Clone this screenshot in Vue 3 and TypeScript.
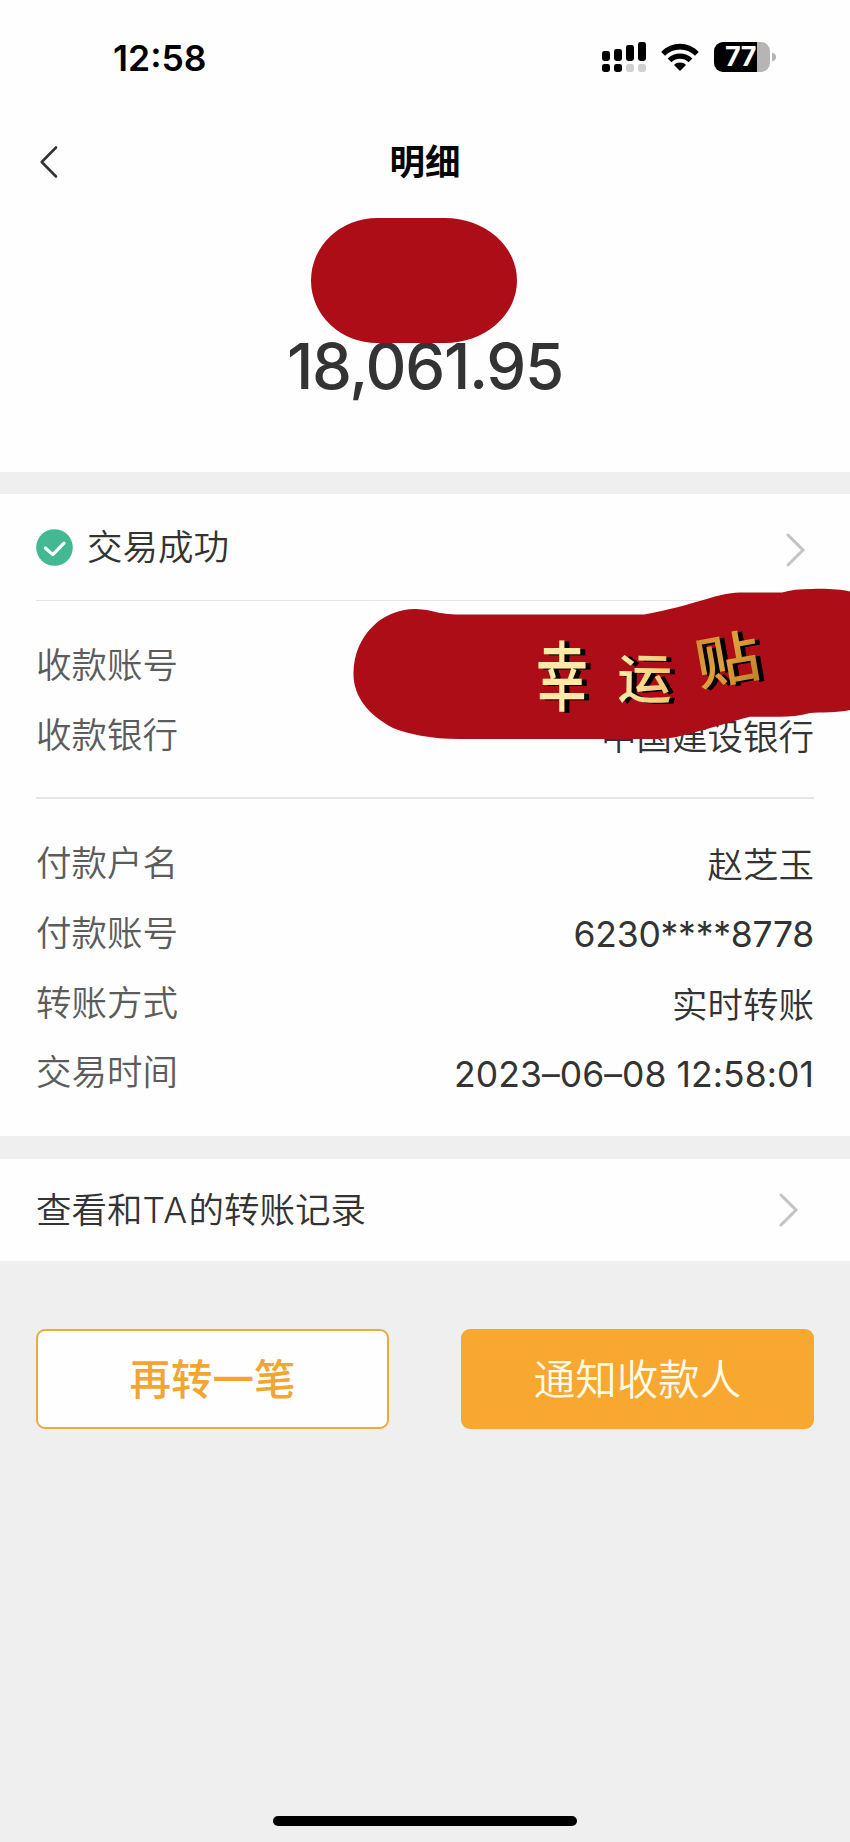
<script setup lang="ts">
interface Row {
  label: string
  value: string
  kind?: 'number' | 'date'
}

const payee: Row[] = [
  { label: '收款账号', value: '' },
  { label: '收款银行', value: '中国建设银行' },
]

const payer: Row[] = [
  { label: '付款户名', value: '赵芝玉' },
  { label: '付款账号', value: '6230****8778', kind: 'number' },
  { label: '转账方式', value: '实时转账' },
  { label: '交易时间', value: '2023–06–08 12:58:01', kind: 'date' },
]
</script>

<template>
  <div class="screen">
    <section class="top">
      <div class="statusbar">
        <span class="clock">12:58</span>
        <div class="indicators">
          <svg class="signal" width="46" height="32" viewBox="0 0 46 32">
            <rect x="1" y="10" width="8" height="10" rx="2.4" />
            <rect x="13" y="8" width="8" height="12" rx="2.4" />
            <rect x="25" y="4" width="8" height="16" rx="2.4" />
            <rect x="37" y="1" width="8" height="19" rx="2.4" />
            <rect x="1" y="23" width="8" height="8" rx="2.4" />
            <rect x="13" y="23" width="8" height="8" rx="2.4" />
            <rect class="dim" x="25" y="23" width="8" height="8" rx="2.4" />
            <rect class="dim" x="37" y="23" width="8" height="8" rx="2.4" />
          </svg>
          <svg class="wifi" width="40" height="30" viewBox="0 0 40 30">
            <path d="M1.2 9.9C11.600-1 28.400-1 38.800 9.900L35 13.800C26.700 5.500 13.300 5.500 5 13.800Z" />
            <path d="M7.600 16.400C14.500 9.700 25.500 9.700 32.400 16.400L28.600 20.300C23.800 15.700 16.200 15.700 11.400 20.300Z" />
            <path d="M14 22.900C17.400 19.800 22.600 19.800 26 22.900L20 28.900Z" />
          </svg>
          <div class="battery">
            <div class="battery-body">77</div>
            <svg width="5" height="10" viewBox="0 0 5 10"><path d="M0 0.500C5.500 1.500 5.500 8.500 0 9.500Z" fill="#b5b5b5" /></svg>
          </div>
        </div>
      </div>
      <header class="nav">
        <svg class="back" width="20" height="34" viewBox="0 0 20 34">
          <path d="M17 2.500L2.700 17L17 31.500" />
        </svg>
        <h1>明细</h1>
      </header>
      <div class="amount">18,061.95</div>
      <div class="patch"></div>
    </section>

    <section class="detail">
      <div class="result">
        <svg class="ok" width="37" height="37" viewBox="0 0 37 37">
          <circle cx="18.500" cy="18.500" r="18.300" />
          <path d="M9.300 19L16.800 25.600L28 14.200" />
        </svg>
        <span>交易成功</span>
        <svg class="chevron" width="20" height="34" viewBox="0 0 20 34">
          <path d="M2 2L17 17L2 32" />
        </svg>
      </div>
      <dl class="group first">
        <div v-for="row in payee" :key="row.label" class="row">
          <dt>{{ row.label }}</dt>
          <dd>{{ row.value }}</dd>
        </div>
      </dl>
      <dl class="group second">
        <div v-for="row in payer" :key="row.label" class="row">
          <dt>{{ row.label }}</dt>
          <dd :class="row.kind">{{ row.value }}</dd>
        </div>
      </dl>
      <svg class="sticker" width="500" height="156" viewBox="350 586 500 156">
        <defs>
          <linearGradient id="gold" x1="0" y1="0" x2="1" y2="1">
            <stop offset="0" stop-color="#c8872a" />
            <stop offset="0.500" stop-color="#dda03c" />
            <stop offset="1" stop-color="#b97820" />
          </linearGradient>
          <linearGradient id="pale" x1="0" y1="0" x2="1" y2="0">
            <stop offset="0" stop-color="#ffeeb0" />
            <stop offset="1" stop-color="#eec46a" />
          </linearGradient>
        </defs>
        <path
          fill="#ad0d17"
          d="M353.500 673C354 635 383 608.500 416 609C434 609.500 436 614.500 460 614.500H644C665 611 690 604 710 598C724 594 731 592.500 744 592.500H782C790 590 800 589 812 589C828 588.500 840 589.500 850 591.500V710C838 713 820 712 810 713C800 716 790 716.500 780 716.700H750C732 721 712 728 692 733C676 737.500 668 739 650 739H460C430 739 408 734 393 728C368 715 353 696 353.500 673Z"
        />
        <g class="charm">
          <text class="light" transform="translate(536 705) scale(.91 1.340)">幸</text>
          <text class="medium" transform="translate(617 698) rotate(1) scale(.96 .95)">运</text>
          <text class="deep" transform="translate(699 686) rotate(-10) scale(1.140 1)">贴</text>
        </g>
      </svg>
    </section>

    <section class="history">
      <span>查看和<i>TA</i>的转账记录</span>
      <svg class="chevron" width="20" height="34" viewBox="0 0 20 34">
        <path d="M2 2L17 17L2 32" />
      </svg>
    </section>

    <div class="actions">
      <button class="ghost" type="button">再转一笔</button>
      <button class="solid" type="button">通知收款人</button>
    </div>
    <div class="home"></div>
  </div>
</template>

<style>
body {
  margin: 0;
  background: #efefef;
}
</style>

<style scoped>
.screen {
  width: 850px;
  height: 1842px;
  display: flex;
  flex-direction: column;
  overflow: hidden;
  background: #efefef;
  color: #333;
  font-family: Inter, 'Noto Sans CJK SC', sans-serif;
  font-size: 35.500px;
  font-weight: 350;
}
.screen * {
  box-sizing: border-box;
}
.top {
  position: relative;
  height: 472px;
  background: #fefefe;
}
.statusbar {
  height: 116px;
  padding: 0 73px 0 113px;
  display: flex;
  justify-content: space-between;
  align-items: center;
}
.clock {
  font-size: 35.500px;
  font-weight: 600;
  color: #000;
}
.indicators {
  display: flex;
  align-items: center;
  margin-top: -3px;
}
.wifi {
  margin-left: 13px;
}
.dim {
  fill: #d0d0d0;
}
.battery {
  display: flex;
  align-items: center;
  gap: 2px;
  margin-left: 14px;
}
.battery-body {
  width: 56px;
  height: 30px;
  padding-left: 11px;
  border-radius: 9px;
  background: linear-gradient(90deg, #000 43px, #b5b5b5 43px);
  color: #fff;
  font-size: 27px;
  font-weight: 700;
  line-height: 30px;
  letter-spacing: -0.500px;
}
.nav {
  height: 92px;
  display: grid;
  grid-template-columns: 85px 1fr 85px;
  align-items: center;
}
.back {
  margin-left: 39px;
  fill: none;
  stroke: #333;
  stroke-width: 2.600;
  stroke-linecap: round;
  stroke-linejoin: round;
}
h1 {
  margin: 0;
  padding-bottom: 6px;
  text-align: center;
  font-size: 35.500px;
  font-weight: 700;
  color: #050505;
}
.amount {
  margin-top: 118px;
  height: 80px;
  line-height: 80px;
  text-align: center;
  font-size: 63.500px;
  font-weight: 500;
  letter-spacing: -1.300px;
}
.patch {
  position: absolute;
  left: 311px;
  top: 218px;
  width: 206px;
  height: 125px;
  border-radius: 66px 72px 72px 66px / 62.500px;
  background: #ad0d17;
}
.detail {
  position: relative;
  height: 642px;
  margin-top: 22px;
  padding: 0 36px;
  background: #fefefe;
}
.result {
  height: 107px;
  display: flex;
  align-items: center;
  border-bottom: 1px solid #e6e6e6;
}
.result span {
  margin-left: 14px;
  padding-bottom: 5px;
}
.ok circle {
  fill: #43b993;
}
.ok path {
  fill: none;
  stroke: #fff;
  stroke-width: 3.200;
  stroke-linecap: round;
  stroke-linejoin: round;
}
.chevron {
  margin-left: auto;
  fill: none;
  stroke: #c4c4c4;
  stroke-width: 3;
  stroke-linecap: round;
}
.result .chevron {
  margin-right: 8px;
  margin-top: 6px;
}
.group {
  margin: 0;
}
.first {
  height: 198px;
  padding-top: 30px;
  border-bottom: 2px solid #e5e5e5;
}
.second {
  padding-top: 30px;
}
.row {
  height: 69.800px;
  display: flex;
  justify-content: space-between;
  line-height: 69.800px;
}
dt {
  color: #5c5c5c;
}
dd {
  margin: 2px 0 0;
}
.number {
  margin-top: 1px;
  font-weight: 400;
  letter-spacing: -0.250px;
}
.date {
  font-weight: 400;
  letter-spacing: 0.060px;
}
.sticker {
  position: absolute;
  left: 350px;
  top: 92px;
}
.charm {
  font-family: 'Noto Sans CJK SC', sans-serif;
  font-size: 57px;
  font-weight: 500;
  filter: drop-shadow(5px 1px 0 #000);
}
.light {
  fill: #ffe9a6;
}
.medium {
  fill: url(#pale);
}
.deep {
  fill: url(#gold);
}
.history {
  height: 102px;
  margin-top: 23px;
  padding: 0 51px 0 36px;
  display: flex;
  align-items: center;
  background: #fefefe;
}
.history span {
  padding-bottom: 5px;
}
.history i {
  font-style: normal;
  letter-spacing: 1.300px;
}
.actions {
  margin-top: 68px;
  padding: 0 36px;
  display: flex;
  justify-content: space-between;
}
.actions button {
  width: 353px;
  height: 100px;
  padding: 0 0 5px;
  border-radius: 9px;
  font-family: 'Noto Sans CJK SC', sans-serif;
  font-size: 41.500px;
}
.actions .ghost {
  border: 2px solid #eba93e;
  background: #fefefe;
  color: #f2a531;
  font-weight: 500;
}
.actions .solid {
  border: 0;
  background: #f8a831;
  color: #fffbe9;
  font-weight: 350;
}
.home {
  width: 304px;
  height: 10px;
  margin: auto auto 16px;
  border-radius: 5px;
  background: #000;
}
</style>
